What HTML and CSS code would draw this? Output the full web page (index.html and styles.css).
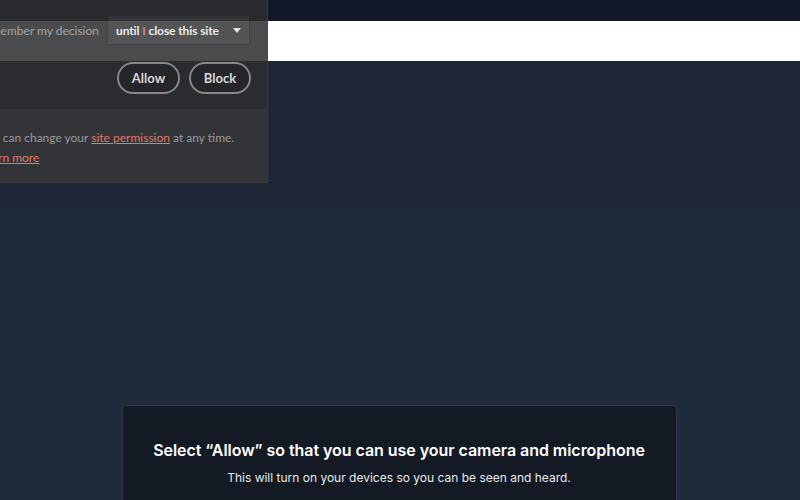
FILE: index.html
```html
<!DOCTYPE html>
<html>
<head>
<meta charset="utf-8">
<link rel="stylesheet" href="styles.css">
</head>
<body>
<div class="page">
  <div class="topbar"></div>
  <div class="whitebar"></div>
  <div class="band"></div>
  <div class="main">
    <div class="card">
      <h1 class="card-title">Select “Allow” so that you can use your camera and microphone</h1>
      <p class="card-sub">This will turn on your devices so you can be seen and heard.</p>
    </div>
  </div>
</div>
<div class="popup">
  <div class="popup-body">
    <div class="popup-title">Use your microphone</div>
    <div class="decision-row">
      <span class="decision-label">Remember my decision</span>
      <div class="select">
        <span class="select-text">until <span class="caret-i">I</span> close this site</span>
        <svg class="select-arrow" width="8" height="5" viewBox="0 0 8 5"><path d="M0 0H8L4 5Z" fill="#e6e6e6"/></svg>
      </div>
    </div>
    <div class="actions">
      <button class="pill pill-allow">Allow</button>
      <button class="pill pill-block">Block</button>
    </div>
  </div>
  <div class="popup-foot">
    <div class="foot-line">You can change your <a class="link">site permission</a> at any time.</div>
    <div class="foot-line"><a class="link">Learn more</a></div>
  </div>
</div>
</body>
</html>
```
FILE: styles.css
```css
html, body {
  margin: 0;
  padding: 0;
}
body {
  width: 800px;
  height: 500px;
  overflow: hidden;
  background: #1f2b3b;
  position: relative;
}
.page {
  display: flex;
  flex-direction: column;
  height: 500px;
}
.topbar {
  flex-shrink: 0;
  height: 21px;
  background: #121827;
}
.whitebar {
  flex-shrink: 0;
  height: 40px;
  background: #ffffff;
}
.band {
  flex-shrink: 0;
  height: 149px;
  background: #1f2737;
}
.main {
  flex: 1 0 auto;
  background: #1f2b3b;
  display: flex;
  justify-content: center;
  align-items: flex-start;
  padding-top: 195px;
}
.card {
  flex-shrink: 0;
  width: 555px;
  height: 120px;
  margin-left: -2px;
  background: #131a24;
  border: 1px solid #2c3848;
  border-radius: 4px;
  box-sizing: border-box;
  text-align: center;
  font-family: "Inter", "Liberation Sans", sans-serif;
  color: #ffffff;
  padding-top: 33px;
}
.card-title {
  margin: 0;
  font-size: 16px;
  font-weight: 600;
  line-height: 22px;
  letter-spacing: -0.05px;
}
.card-sub {
  margin: 8px 0 0;
  font-size: 12px;
  font-weight: 400;
  line-height: 18px;
  color: #e8eaee;
}

.popup {
  position: absolute;
  left: -37px;
  top: -42px;
  width: 305px;
  background: rgba(44, 45, 48, 0.86);
  border: 1px solid rgba(70, 71, 75, 0.6);
  box-sizing: border-box;
  font-family: "Lato", "Noto Sans", sans-serif;
  font-size: 12px;
  color: #cfcfcf;
  white-space: nowrap;
}
.popup-body {
  padding: 24px 17px 15px 16px;
  display: flex;
  flex-direction: column;
}
.popup-title {
  font-weight: 700;
  font-size: 13px;
  line-height: 18px;
  color: #ffffff;
  margin-left: 25px;
}
.decision-row {
  display: flex;
  align-items: center;
  justify-content: flex-end;
  gap: 8px;
  margin-top: 14px;
}
.decision-label {
  color: #a5a5a5;
  font-size: 12px;
}
.select {
  flex-shrink: 0;
  width: 143px;
  height: 30px;
  box-sizing: border-box;
  border: 1px solid rgba(0, 0, 0, 0.18);
  background: rgba(255, 255, 255, 0.05);
  display: flex;
  align-items: center;
  justify-content: space-between;
  padding: 0 8px 0 8px;
}
.select-text {
  font-weight: 700;
  color: #ececec;
  font-size: 12px;
  letter-spacing: -0.1px;
}
.caret-i {
  color: #d9828a;
}
.actions {
  display: flex;
  justify-content: flex-end;
  gap: 9px;
  margin-top: 17px;
  margin-right: -1px;
}
.pill {
  height: 32px;
  padding: 0;
  border: 2px solid #85878b;
  border-radius: 16px;
  background: #24262a;
  color: #d8d8d8;
  font-family: "Lato", "Noto Sans", sans-serif;
  font-size: 13px;
  font-weight: 700;
}
.pill-allow {
  width: 63px;
}
.pill-block {
  width: 62px;
}
.popup-foot {
  background: rgba(52, 53, 57, 0.92);
  padding: 19px 16px 14px 16px;
  color: #9a9a9a;
}
.foot-line {
  line-height: 20px;
  font-size: 12px;
}
.link {
  color: #e07a6a;
  text-decoration: underline;
}
```
